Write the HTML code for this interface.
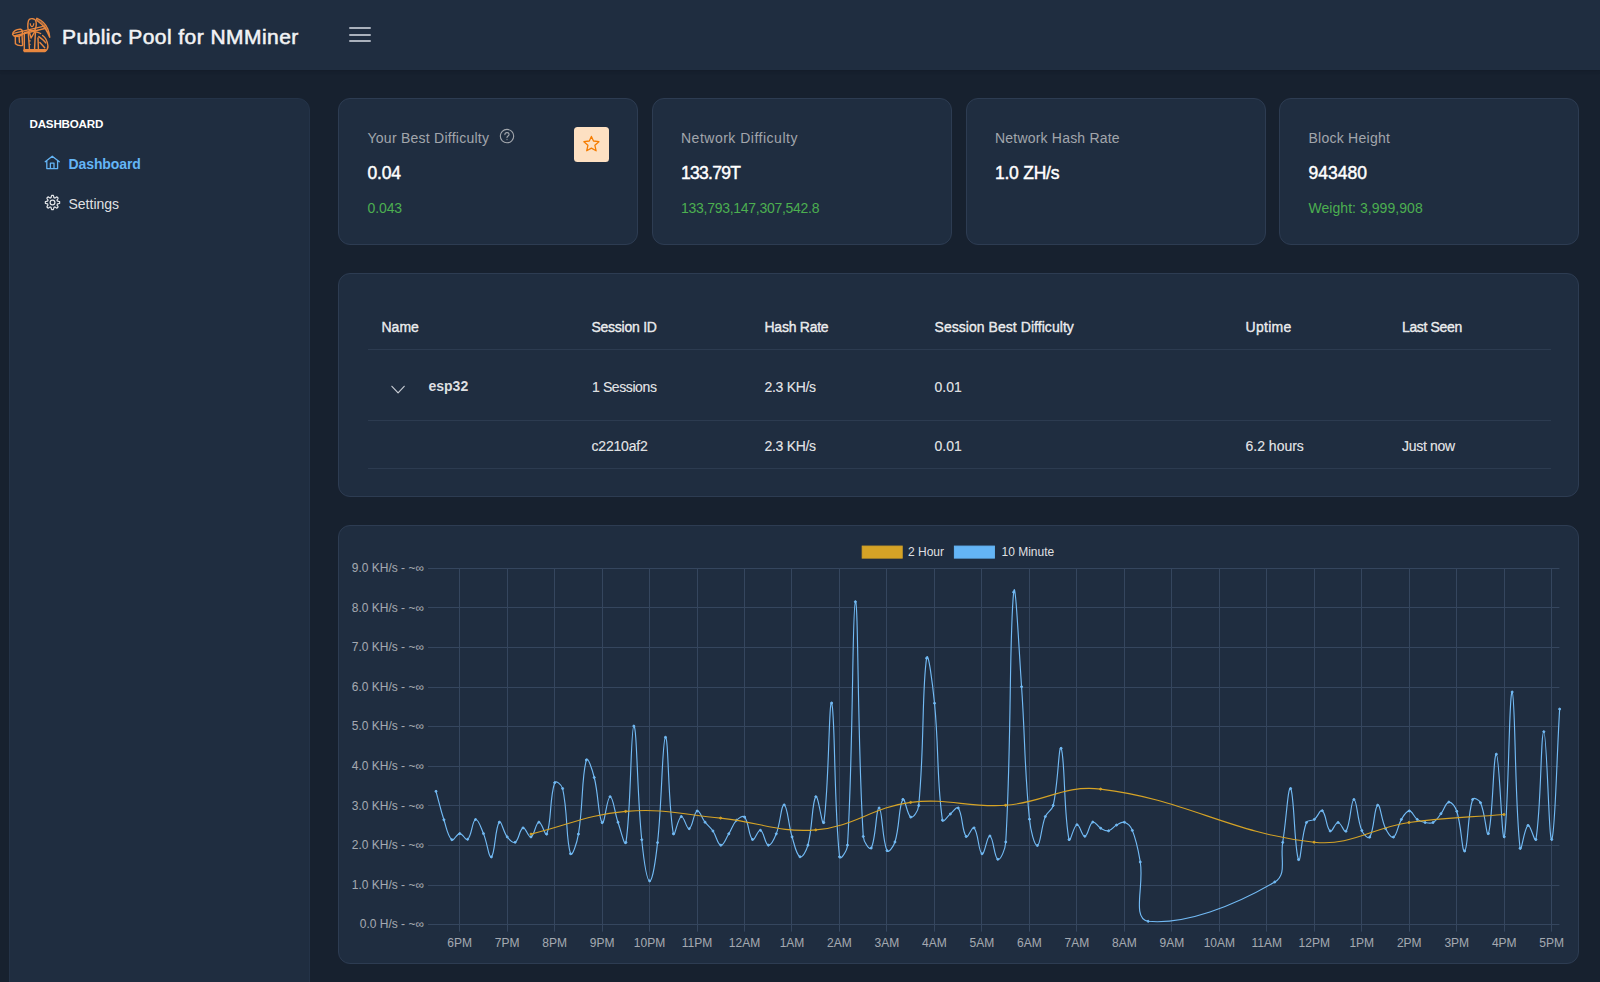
<!DOCTYPE html>
<html><head><meta charset="utf-8">
<style>
*{box-sizing:border-box;margin:0;padding:0}
html,body{width:1600px;height:982px;overflow:hidden;background:#17212f;font-family:"Liberation Sans",sans-serif;color:rgba(255,255,255,.87)}
.a{position:absolute;white-space:nowrap;line-height:1}
.topbar{position:absolute;left:0;top:0;width:1600px;height:70px;background:#1f2d40;box-shadow:0 3px 5px rgba(0,0,0,.02),0 0 2px rgba(0,0,0,.05),0 1px 4px rgba(0,0,0,.08)}
.sidebar{position:absolute;left:9px;top:98px;width:301px;height:900px;background:#1f2d40;border-radius:12px;border:1px solid #243348}
.card{position:absolute;background:#1f2d40;border:1px solid #2d3c52;border-radius:12px}
.lbl{font-size:14px;color:#a2a6ac}
.val{font-size:17.5px;color:#fff;font-weight:400;-webkit-text-stroke:0.45px #fff}
.grn{font-size:14px;color:#4caf50}
.th{font-size:14px;font-weight:400;-webkit-text-stroke:0.4px rgba(255,255,255,.87)}
.b7{font-weight:700;-webkit-text-stroke:0}
.td{font-size:14px;-webkit-text-stroke:0.15px rgba(255,255,255,.87)}
.hl{position:absolute;left:368px;width:1183px;height:1px;background:#2c3b50}
</style></head><body>
<div class="topbar"></div>
<svg class="a" style="left:8px;top:14px" width="48" height="42" viewBox="0 0 48 42" fill="none" stroke="#e8873f" stroke-width="1.45" stroke-linejoin="round" stroke-linecap="round">
<path d="M29,4.3 C33.5,6.2 37.8,10 39.8,15 C40.8,17.8 41.6,20.5 41.7,23.2 C40.6,20.6 39.4,18 37.6,15.2 C35.8,12.2 32.6,9 29.6,7 C28.6,6.2 28.4,5 29,4.3 Z"/>
<path d="M30.5,6.2 C33.5,8.5 36.5,11.5 38.6,15.5" stroke-width="1"/>
<path d="M5.5,19.4 L37.2,11.9 M6.2,22 L37.8,14.2"/>
<path d="M4.6,20.6 C4.4,17.6 8.4,15 12.6,15.3 C14.4,15.9 14.7,18.6 14.1,20.7 C11,23 6.4,23 4.6,20.6 Z"/>
<path d="M7.3,21.9 L7.4,29.8 C9,31.4 11.8,31.8 14.3,31.5 M11.1,22.4 L11.5,28.2 M14,21 L14.6,31"/>
<path d="M20.2,15.6 C19.4,12 19.8,6.6 21.4,5.3 C23.2,4.1 26.7,4.5 27.6,6.3 C28.5,8.6 28.1,13 27.1,15.7 C25.6,17.1 21.6,17.1 20.2,15.6 Z"/>
<path d="M22.2,9.6 C22.8,13.6 25.2,13.6 25.8,9.6" stroke-width="1.1"/>
<path d="M16.3,19 C18,18.1 20,17.9 21.2,17.7 L23.1,24 L26.8,17.7 C29,17.9 31,18.5 32.6,19.5 M16.3,19 L16.3,37.5 L37,37.5 C39.1,36.1 40.1,34 39.9,31.8 C39.5,27.5 38.1,24 34.6,21.5"/>
<path d="M20.3,18.7 L21.4,34.6 M27.4,18.7 L26.6,34.6 M30.8,22.6 C33.2,24.3 36,26.3 37.7,28.9 M31.9,28.6 L36.7,33.7 M30,24 L30.4,34.5"/>
<path d="M16.6,36.2 L37.2,36.2" stroke-width="2.6"/>
<circle cx="21.9" cy="26.9" r="0.8" fill="#e8873f" stroke="none"/><circle cx="21.9" cy="30.5" r="0.8" fill="#e8873f" stroke="none"/>
</svg>
<div class="a" style="left:62px;top:25.6px;font-size:21px;font-weight:400;letter-spacing:0.45px;color:#f2f3f5;-webkit-text-stroke:0.55px #f2f3f5">Public Pool for NMMiner</div>
<div class="a" style="left:349px;top:27px;width:22px;height:2px;background:#aab1bc;border-radius:1px"></div>
<div class="a" style="left:349px;top:33.5px;width:22px;height:2px;background:#aab1bc;border-radius:1px"></div>
<div class="a" style="left:349px;top:39.5px;width:22px;height:2px;background:#aab1bc;border-radius:1px"></div>

<div class="sidebar"></div>
<div class="a" style="left:29.5px;top:117.5px;font-size:11.6px;font-weight:700;letter-spacing:-0.2px;color:#fff">DASHBOARD</div>
<svg class="a" style="left:44px;top:155px" width="17" height="15" viewBox="0 0 17 15" fill="none" stroke="#64b5f6" stroke-width="1.3" stroke-linejoin="round" stroke-linecap="round">
<path d="M1.2,6.7 L8.25,1.2 L15.3,6.7 M2.8,5.6 L2.8,13.6 L13.6,13.6 L13.6,5.6 M6.4,13.6 L6.4,8.2 L10,8.2 L10,13.6"/>
</svg>
<div class="a" style="left:68.5px;top:157px;font-size:14px;font-weight:700;letter-spacing:-0.1px;color:#64b5f6">Dashboard</div>
<svg class="a" style="left:44px;top:194px" width="17" height="17" viewBox="-8.5 -8.5 17 17" fill="none" stroke="#e4e6e9" stroke-width="1.2" stroke-linejoin="round">
<path d="M0.00,-7.15 L0.28,-7.14 L0.56,-7.13 L0.84,-7.10 L1.04,-6.57 L1.19,-5.98 L1.30,-5.40 L1.37,-4.86 L1.56,-4.80 L1.75,-4.74 L1.93,-4.67 L2.11,-4.59 L2.29,-4.50 L2.47,-4.41 L2.90,-4.73 L3.39,-5.07 L3.91,-5.38 L4.43,-5.61 L4.64,-5.44 L4.85,-5.25 L5.06,-5.06 L5.25,-4.85 L5.44,-4.64 L5.61,-4.43 L5.38,-3.91 L5.07,-3.39 L4.73,-2.90 L4.41,-2.47 L4.50,-2.29 L4.59,-2.11 L4.67,-1.93 L4.74,-1.75 L4.80,-1.56 L4.86,-1.37 L5.40,-1.30 L5.98,-1.19 L6.57,-1.04 L7.10,-0.84 L7.13,-0.56 L7.14,-0.28 L7.15,-0.00 L7.14,0.28 L7.13,0.56 L7.10,0.84 L6.57,1.04 L5.98,1.19 L5.40,1.30 L4.86,1.37 L4.80,1.56 L4.74,1.75 L4.67,1.93 L4.59,2.11 L4.50,2.29 L4.41,2.47 L4.73,2.90 L5.07,3.39 L5.38,3.91 L5.61,4.43 L5.44,4.64 L5.25,4.85 L5.06,5.06 L4.85,5.25 L4.64,5.44 L4.43,5.61 L3.91,5.38 L3.39,5.07 L2.90,4.73 L2.47,4.41 L2.29,4.50 L2.11,4.59 L1.93,4.67 L1.75,4.74 L1.56,4.80 L1.37,4.86 L1.30,5.40 L1.19,5.98 L1.04,6.57 L0.84,7.10 L0.56,7.13 L0.28,7.14 L0.00,7.15 L-0.28,7.14 L-0.56,7.13 L-0.84,7.10 L-1.04,6.57 L-1.19,5.98 L-1.30,5.40 L-1.37,4.86 L-1.56,4.80 L-1.75,4.74 L-1.93,4.67 L-2.11,4.59 L-2.29,4.50 L-2.47,4.41 L-2.90,4.73 L-3.39,5.07 L-3.91,5.38 L-4.43,5.61 L-4.64,5.44 L-4.85,5.25 L-5.06,5.06 L-5.25,4.85 L-5.44,4.64 L-5.61,4.43 L-5.38,3.91 L-5.07,3.39 L-4.73,2.90 L-4.41,2.47 L-4.50,2.29 L-4.59,2.11 L-4.67,1.93 L-4.74,1.75 L-4.80,1.56 L-4.86,1.37 L-5.40,1.30 L-5.98,1.19 L-6.57,1.04 L-7.10,0.84 L-7.13,0.56 L-7.14,0.28 L-7.15,0.00 L-7.14,-0.28 L-7.13,-0.56 L-7.10,-0.84 L-6.57,-1.04 L-5.98,-1.19 L-5.40,-1.30 L-4.86,-1.37 L-4.80,-1.56 L-4.74,-1.75 L-4.67,-1.93 L-4.59,-2.11 L-4.50,-2.29 L-4.41,-2.47 L-4.73,-2.90 L-5.07,-3.39 L-5.38,-3.91 L-5.61,-4.43 L-5.44,-4.64 L-5.25,-4.85 L-5.06,-5.06 L-4.85,-5.25 L-4.64,-5.44 L-4.43,-5.61 L-3.91,-5.38 L-3.39,-5.07 L-2.90,-4.73 L-2.47,-4.41 L-2.29,-4.50 L-2.11,-4.59 L-1.93,-4.67 L-1.75,-4.74 L-1.56,-4.80 L-1.37,-4.86 L-1.30,-5.40 L-1.19,-5.98 L-1.04,-6.57 L-0.84,-7.10 L-0.56,-7.13 L-0.28,-7.14Z"/>
<circle cx="0" cy="0" r="2.4"/>
</svg>
<div class="a" style="left:68.5px;top:197px;font-size:14px;color:rgba(255,255,255,.87)">Settings</div>

<div class="card" style="left:338px;top:98px;width:300px;height:147px"></div>
<div class="card" style="left:652px;top:98px;width:300px;height:147px"></div>
<div class="card" style="left:966px;top:98px;width:300px;height:147px"></div>
<div class="card" style="left:1279px;top:98px;width:300px;height:147px"></div>

<div class="a lbl" style="left:367.5px;top:131px;letter-spacing:0.25px">Your Best Difficulty</div>
<svg class="a" style="left:498px;top:128px" width="17" height="17" viewBox="0 0 17 17" fill="none" stroke="#a2a6ac" stroke-width="1.1" stroke-linecap="round">
<circle cx="9" cy="8.1" r="6.7"/>
<path d="M6.9,6.6 C6.9,5.2 7.9,4.6 9,4.6 C10.2,4.6 11.1,5.4 11.1,6.5 C11.1,7.9 9,8.2 9,9.6"/>
<circle cx="9" cy="11.6" r="0.55" fill="#a2a6ac" stroke="none"/>
</svg>
<div class="a val" style="left:367.5px;top:165px;letter-spacing:-0.2px">0.04</div>
<div class="a grn" style="left:367.5px;top:201px;letter-spacing:-0.1px">0.043</div>
<div class="a" style="left:574px;top:127px;width:35px;height:35px;background:#fde0c2;border-radius:3.5px"></div>
<svg class="a" style="left:574px;top:127px" width="35" height="35" viewBox="574 127 35 35" fill="none" stroke="#f57c00" stroke-width="1.3" stroke-linejoin="round">
<path d="M591.4,136.4 L593.5,141 L598.9,141.7 L594.9,145.3 L596.1,150.8 L591.4,148.1 L586.7,150.8 L587.9,145.3 L583.9,141.7 L589.3,141 Z"/>
</svg>

<div class="a lbl" style="left:681px;top:131px;letter-spacing:0.5px">Network Difficulty</div>
<div class="a val" style="left:681px;top:165px;letter-spacing:-0.7px">133.79T</div>
<div class="a grn" style="left:681px;top:201px;letter-spacing:-0.28px">133,793,147,307,542.8</div>

<div class="a lbl" style="left:995px;top:131px;letter-spacing:0.2px">Network Hash Rate</div>
<div class="a val" style="left:995px;top:165px;letter-spacing:-0.25px">1.0 ZH/s</div>

<div class="a lbl" style="left:1308.5px;top:131px;letter-spacing:0.25px">Block Height</div>
<div class="a val" style="left:1308.5px;top:165px">943480</div>
<div class="a grn" style="left:1308.5px;top:201px;letter-spacing:0.05px">Weight: 3,999,908</div>

<div class="card" style="left:338px;top:273px;width:1241px;height:224px"></div>
<div class="a th" style="left:381.5px;top:320px">Name</div>
<div class="a th" style="left:591.5px;top:320px;letter-spacing:-0.25px">Session ID</div>
<div class="a th" style="left:764.5px;top:320px;letter-spacing:-0.25px">Hash Rate</div>
<div class="a th" style="left:934.5px;top:320px;letter-spacing:0.05px">Session Best Difficulty</div>
<div class="a th" style="left:1245.5px;top:320px;letter-spacing:0.3px">Uptime</div>
<div class="a th" style="left:1402px;top:320px;letter-spacing:-0.35px">Last Seen</div>
<div class="hl" style="top:349px"></div>
<svg class="a" style="left:389px;top:383px" width="18" height="13" viewBox="389 383 18 13" fill="none" stroke="#c5cad2" stroke-width="1.2" stroke-linecap="round" stroke-linejoin="round">
<path d="M391.9,386.3 L398.1,392.8 L404.2,386.3"/>
</svg>
<div class="a th b7" style="left:428.5px;top:379px">esp32</div>
<div class="a td" style="left:592px;top:379.5px;letter-spacing:-0.4px">1 Sessions</div>
<div class="a td" style="left:764.5px;top:379.5px;letter-spacing:-0.3px">2.3 KH/s</div>
<div class="a td" style="left:934.5px;top:379.5px">0.01</div>
<div class="hl" style="top:420px"></div>
<div class="a td" style="left:591.5px;top:438.5px;letter-spacing:-0.2px">c2210af2</div>
<div class="a td" style="left:764.5px;top:438.5px;letter-spacing:-0.3px">2.3 KH/s</div>
<div class="a td" style="left:934.5px;top:438.5px">0.01</div>
<div class="a td" style="left:1245.5px;top:438.5px">6.2 hours</div>
<div class="a td" style="left:1402px;top:438.5px;letter-spacing:-0.3px">Just now</div>
<div class="hl" style="top:468px"></div>

<div class="card" style="left:338px;top:525px;width:1241px;height:439px"></div>
<svg id="chart" class="a" style="left:0;top:0" width="1600" height="982" viewBox="0 0 1600 982">
<line x1="428" y1="568.50" x2="1559.40" y2="568.50" stroke="#35465e" stroke-width="1"/>
<line x1="428" y1="607.50" x2="1559.40" y2="607.50" stroke="#35465e" stroke-width="1"/>
<line x1="428" y1="647.50" x2="1559.40" y2="647.50" stroke="#35465e" stroke-width="1"/>
<line x1="428" y1="687.50" x2="1559.40" y2="687.50" stroke="#35465e" stroke-width="1"/>
<line x1="428" y1="726.50" x2="1559.40" y2="726.50" stroke="#35465e" stroke-width="1"/>
<line x1="428" y1="766.50" x2="1559.40" y2="766.50" stroke="#35465e" stroke-width="1"/>
<line x1="428" y1="805.50" x2="1559.40" y2="805.50" stroke="#35465e" stroke-width="1"/>
<line x1="428" y1="845.50" x2="1559.40" y2="845.50" stroke="#35465e" stroke-width="1"/>
<line x1="428" y1="885.50" x2="1559.40" y2="885.50" stroke="#35465e" stroke-width="1"/>
<line x1="428" y1="924.50" x2="1559.40" y2="924.50" stroke="#35465e" stroke-width="1"/>
<line x1="459.50" y1="568.40" x2="459.50" y2="931.65" stroke="#35465e" stroke-width="1"/>
<line x1="507.50" y1="568.40" x2="507.50" y2="931.65" stroke="#35465e" stroke-width="1"/>
<line x1="554.50" y1="568.40" x2="554.50" y2="931.65" stroke="#35465e" stroke-width="1"/>
<line x1="602.50" y1="568.40" x2="602.50" y2="931.65" stroke="#35465e" stroke-width="1"/>
<line x1="649.50" y1="568.40" x2="649.50" y2="931.65" stroke="#35465e" stroke-width="1"/>
<line x1="697.50" y1="568.40" x2="697.50" y2="931.65" stroke="#35465e" stroke-width="1"/>
<line x1="744.50" y1="568.40" x2="744.50" y2="931.65" stroke="#35465e" stroke-width="1"/>
<line x1="791.50" y1="568.40" x2="791.50" y2="931.65" stroke="#35465e" stroke-width="1"/>
<line x1="839.50" y1="568.40" x2="839.50" y2="931.65" stroke="#35465e" stroke-width="1"/>
<line x1="886.50" y1="568.40" x2="886.50" y2="931.65" stroke="#35465e" stroke-width="1"/>
<line x1="934.50" y1="568.40" x2="934.50" y2="931.65" stroke="#35465e" stroke-width="1"/>
<line x1="981.50" y1="568.40" x2="981.50" y2="931.65" stroke="#35465e" stroke-width="1"/>
<line x1="1029.50" y1="568.40" x2="1029.50" y2="931.65" stroke="#35465e" stroke-width="1"/>
<line x1="1076.50" y1="568.40" x2="1076.50" y2="931.65" stroke="#35465e" stroke-width="1"/>
<line x1="1124.50" y1="568.40" x2="1124.50" y2="931.65" stroke="#35465e" stroke-width="1"/>
<line x1="1171.50" y1="568.40" x2="1171.50" y2="931.65" stroke="#35465e" stroke-width="1"/>
<line x1="1219.50" y1="568.40" x2="1219.50" y2="931.65" stroke="#35465e" stroke-width="1"/>
<line x1="1266.50" y1="568.40" x2="1266.50" y2="931.65" stroke="#35465e" stroke-width="1"/>
<line x1="1314.50" y1="568.40" x2="1314.50" y2="931.65" stroke="#35465e" stroke-width="1"/>
<line x1="1361.50" y1="568.40" x2="1361.50" y2="931.65" stroke="#35465e" stroke-width="1"/>
<line x1="1409.50" y1="568.40" x2="1409.50" y2="931.65" stroke="#35465e" stroke-width="1"/>
<line x1="1456.50" y1="568.40" x2="1456.50" y2="931.65" stroke="#35465e" stroke-width="1"/>
<line x1="1504.50" y1="568.40" x2="1504.50" y2="931.65" stroke="#35465e" stroke-width="1"/>
<line x1="1551.50" y1="568.40" x2="1551.50" y2="931.65" stroke="#35465e" stroke-width="1"/>
<g font-family="Liberation Sans" font-size="12" fill="rgba(255,255,255,0.6)"><text x="424" y="572.10" text-anchor="end">9.0 KH/s - ~∞</text><text x="424" y="611.68" text-anchor="end">8.0 KH/s - ~∞</text><text x="424" y="651.27" text-anchor="end">7.0 KH/s - ~∞</text><text x="424" y="690.85" text-anchor="end">6.0 KH/s - ~∞</text><text x="424" y="730.43" text-anchor="end">5.0 KH/s - ~∞</text><text x="424" y="770.02" text-anchor="end">4.0 KH/s - ~∞</text><text x="424" y="809.60" text-anchor="end">3.0 KH/s - ~∞</text><text x="424" y="849.18" text-anchor="end">2.0 KH/s - ~∞</text><text x="424" y="888.77" text-anchor="end">1.0 KH/s - ~∞</text><text x="424" y="928.35" text-anchor="end">0.0 H/s - ~∞</text><text x="459.60" y="946.5" text-anchor="middle">6PM</text><text x="507.08" y="946.5" text-anchor="middle">7PM</text><text x="554.57" y="946.5" text-anchor="middle">8PM</text><text x="602.05" y="946.5" text-anchor="middle">9PM</text><text x="649.53" y="946.5" text-anchor="middle">10PM</text><text x="697.01" y="946.5" text-anchor="middle">11PM</text><text x="744.50" y="946.5" text-anchor="middle">12AM</text><text x="791.98" y="946.5" text-anchor="middle">1AM</text><text x="839.46" y="946.5" text-anchor="middle">2AM</text><text x="886.94" y="946.5" text-anchor="middle">3AM</text><text x="934.43" y="946.5" text-anchor="middle">4AM</text><text x="981.91" y="946.5" text-anchor="middle">5AM</text><text x="1029.39" y="946.5" text-anchor="middle">6AM</text><text x="1076.87" y="946.5" text-anchor="middle">7AM</text><text x="1124.36" y="946.5" text-anchor="middle">8AM</text><text x="1171.84" y="946.5" text-anchor="middle">9AM</text><text x="1219.32" y="946.5" text-anchor="middle">10AM</text><text x="1266.80" y="946.5" text-anchor="middle">11AM</text><text x="1314.29" y="946.5" text-anchor="middle">12PM</text><text x="1361.77" y="946.5" text-anchor="middle">1PM</text><text x="1409.25" y="946.5" text-anchor="middle">2PM</text><text x="1456.73" y="946.5" text-anchor="middle">3PM</text><text x="1504.22" y="946.5" text-anchor="middle">4PM</text><text x="1551.70" y="946.5" text-anchor="middle">5PM</text></g>
<rect x="862.2" y="546.1" width="40" height="12" fill="#d5a326" stroke="#d5a326" stroke-width="1"/>
<rect x="954.4" y="546.1" width="40" height="12" fill="#64b5f6" stroke="#64b5f6" stroke-width="1"/>
<g font-family="Liberation Sans" font-size="12" fill="rgba(255,255,255,0.87)"><text x="908" y="556">2 Hour</text><text x="1001.5" y="556">10 Minute</text></g>
<path d="M436.00,791.30C439.17,802.70 440.24,808.57 443.91,819.80C446.57,827.93 447.51,835.94 451.83,839.70C453.84,841.46 456.54,833.68 459.74,833.60C462.87,833.52 465.67,841.07 467.65,839.30C472.00,835.43 471.96,820.80 475.56,819.50C478.30,818.52 480.97,827.67 483.48,833.60C487.30,842.63 488.80,858.76 491.39,856.90C495.13,854.20 494.99,827.65 499.30,822.20C501.33,819.65 503.19,831.79 507.22,836.90C509.53,839.83 512.80,843.63 515.13,842.30C519.13,840.03 519.38,829.15 523.04,827.90C525.71,826.99 528.31,837.85 530.96,836.90C534.64,835.57 535.46,822.80 538.87,822.20C541.79,821.68 545.42,837.51 546.78,834.10C551.75,821.71 549.37,798.05 554.70,782.70C555.70,779.81 561.79,784.81 562.61,788.50C568.12,813.21 565.73,839.90 570.52,853.70C572.06,858.14 577.04,842.38 578.43,834.10C583.37,804.90 581.31,778.00 586.35,760.00C587.64,755.36 592.39,770.10 594.26,777.50C598.72,795.18 598.20,817.88 602.17,822.70C604.53,825.56 606.89,796.80 610.09,796.70C613.22,796.60 614.51,812.11 618.00,822.20C620.84,830.39 624.92,848.43 625.91,842.40C631.25,809.99 630.62,726.65 633.83,726.10C636.95,725.57 637.11,794.45 641.74,839.70C643.44,856.37 646.37,880.30 649.65,880.90C652.71,881.46 655.85,858.12 657.56,842.60C662.18,800.68 662.17,739.14 665.48,737.30C668.51,735.62 668.10,807.32 673.39,833.80C674.43,839.00 677.72,817.66 681.30,816.50C684.05,815.62 686.50,829.64 689.22,828.70C692.83,827.44 693.42,812.52 697.13,811.00C699.75,809.92 701.64,817.91 705.04,822.20C707.97,825.91 710.29,827.12 712.95,831.00C716.62,836.32 717.45,844.60 720.87,845.20C723.78,845.72 725.81,838.49 728.78,833.80C732.14,828.49 732.58,824.54 736.69,820.20C738.91,817.86 742.94,815.07 744.61,817.10C749.27,822.79 748.33,836.01 752.52,839.50C754.66,841.29 757.78,829.35 760.43,830.30C764.12,831.63 764.87,844.43 768.35,845.20C771.20,845.83 774.26,838.90 776.26,833.80C780.59,822.78 781.16,804.31 784.17,804.90C787.49,805.55 788.25,824.32 792.09,836.90C794.58,845.08 796.17,854.79 800.00,856.80C802.50,858.11 806.50,850.54 807.91,845.20C812.83,826.50 811.74,802.53 815.82,796.70C818.07,793.49 822.57,829.51 823.74,822.60C828.90,792.03 828.88,697.01 831.65,703.00C835.21,710.69 833.76,804.67 839.56,856.80C840.09,861.55 847.13,850.76 847.48,845.20C853.46,748.72 852.17,603.47 855.39,601.70C858.50,599.99 857.33,743.51 863.30,836.50C863.66,842.03 869.60,850.91 871.22,848.00C875.93,839.51 876.06,807.48 879.13,808.00C882.39,808.56 882.06,840.00 887.04,850.70C888.39,853.60 893.60,846.38 894.95,842.00C899.93,825.86 898.49,806.28 902.87,799.40C904.82,796.32 907.11,815.68 910.78,817.10C913.44,818.12 918.14,811.02 918.69,805.50C924.47,747.46 921.78,689.40 926.61,658.20C928.11,648.52 932.74,685.09 934.52,703.30C939.07,749.89 936.60,779.42 942.43,820.20C942.93,823.70 947.16,816.45 950.35,814.00C953.49,811.57 956.67,805.74 958.26,808.00C963.00,814.74 961.63,830.79 966.17,836.50C967.96,838.75 972.18,825.81 974.08,827.90C978.51,832.73 978.32,851.92 982.00,853.80C984.65,855.16 987.11,835.03 989.91,836.00C993.44,837.23 994.25,857.95 997.82,859.30C1000.58,860.35 1005.29,849.56 1005.74,842.00C1011.62,742.72 1009.06,637.23 1013.65,592.20C1015.39,575.11 1018.92,648.86 1021.56,686.70C1025.25,739.66 1024.23,766.57 1029.47,819.20C1030.56,830.09 1034.36,846.00 1037.39,845.50C1040.69,844.96 1040.96,827.60 1045.30,816.60C1047.29,811.56 1052.00,810.65 1053.21,805.40C1058.33,783.33 1058.68,743.02 1061.13,748.30C1065.01,756.70 1063.69,813.79 1069.04,839.60C1070.02,844.35 1073.50,825.42 1076.95,824.70C1079.83,824.10 1081.93,836.78 1084.87,836.30C1088.26,835.74 1088.86,824.11 1092.78,822.10C1095.19,820.87 1097.24,826.30 1100.69,828.20C1103.57,829.78 1105.69,831.37 1108.61,830.80C1112.02,830.13 1113.12,826.93 1116.52,825.10C1119.45,823.53 1121.74,821.40 1124.43,822.30C1128.07,823.52 1130.71,826.30 1132.34,830.40C1137.04,842.18 1138.03,849.18 1140.26,862.00C1144.36,885.54 1131.44,918.81 1148.17,921.30C1185.25,924.65 1233.53,906.19 1274.78,882.00C1287.34,874.63 1280.00,858.32 1282.69,842.40C1286.33,820.92 1287.87,785.53 1290.60,788.50C1294.20,792.41 1294.38,850.71 1298.52,859.60C1300.71,864.31 1301.26,835.64 1306.43,822.50C1307.59,819.56 1311.69,821.38 1314.34,819.40C1318.02,816.66 1320.04,809.07 1322.26,810.70C1326.37,813.71 1326.04,827.92 1330.17,831.00C1332.37,832.64 1334.94,822.46 1338.08,822.50C1341.27,822.54 1344.32,833.64 1345.99,831.20C1350.65,824.44 1350.71,799.62 1353.91,799.50C1357.04,799.38 1357.02,819.20 1361.82,830.60C1363.35,834.24 1368.23,839.51 1369.73,837.10C1374.56,829.35 1374.03,807.14 1377.65,805.20C1380.36,803.74 1381.25,819.92 1385.56,828.60C1387.58,832.68 1391.10,838.48 1393.47,837.10C1397.43,834.80 1397.43,825.95 1401.39,819.40C1403.76,815.47 1406.13,810.90 1409.30,810.90C1412.46,810.90 1413.56,816.72 1417.21,819.40C1419.89,821.36 1421.85,821.86 1425.12,822.50C1428.18,823.10 1430.50,823.91 1433.04,822.50C1436.83,820.39 1438.06,817.43 1440.95,813.70C1444.39,809.27 1445.47,802.61 1448.86,802.10C1451.80,801.65 1455.32,806.79 1456.78,811.30C1461.65,826.35 1461.92,853.06 1464.69,851.00C1468.25,848.34 1467.16,816.10 1472.60,799.50C1473.49,796.78 1479.18,799.82 1480.52,802.70C1485.51,813.46 1486.62,839.14 1488.43,833.60C1492.95,819.74 1493.24,753.57 1496.34,754.20C1499.57,754.85 1501.95,845.86 1504.26,836.80C1508.28,820.98 1509.12,689.79 1512.17,692.00C1515.45,694.39 1514.60,802.09 1520.08,848.30C1520.93,855.45 1524.20,827.51 1527.99,825.40C1530.53,823.99 1535.08,844.38 1535.91,839.50C1541.41,806.90 1540.65,731.70 1543.82,731.70C1546.99,731.70 1548.87,843.59 1551.73,839.50C1555.20,834.55 1556.48,761.26 1559.65,709.10" fill="none" stroke="#72baf4" stroke-width="1.15"/>
<g fill="#72baf4" stroke="#72baf4" stroke-width="1"><circle cx="436.00" cy="791.30" r="1"/><circle cx="443.91" cy="819.80" r="1"/><circle cx="451.83" cy="839.70" r="1"/><circle cx="459.74" cy="833.60" r="1"/><circle cx="467.65" cy="839.30" r="1"/><circle cx="475.56" cy="819.50" r="1"/><circle cx="483.48" cy="833.60" r="1"/><circle cx="491.39" cy="856.90" r="1"/><circle cx="499.30" cy="822.20" r="1"/><circle cx="507.22" cy="836.90" r="1"/><circle cx="515.13" cy="842.30" r="1"/><circle cx="523.04" cy="827.90" r="1"/><circle cx="530.96" cy="836.90" r="1"/><circle cx="538.87" cy="822.20" r="1"/><circle cx="546.78" cy="834.10" r="1"/><circle cx="554.70" cy="782.70" r="1"/><circle cx="562.61" cy="788.50" r="1"/><circle cx="570.52" cy="853.70" r="1"/><circle cx="578.43" cy="834.10" r="1"/><circle cx="586.35" cy="760.00" r="1"/><circle cx="594.26" cy="777.50" r="1"/><circle cx="602.17" cy="822.70" r="1"/><circle cx="610.09" cy="796.70" r="1"/><circle cx="618.00" cy="822.20" r="1"/><circle cx="625.91" cy="842.40" r="1"/><circle cx="633.83" cy="726.10" r="1"/><circle cx="641.74" cy="839.70" r="1"/><circle cx="649.65" cy="880.90" r="1"/><circle cx="657.56" cy="842.60" r="1"/><circle cx="665.48" cy="737.30" r="1"/><circle cx="673.39" cy="833.80" r="1"/><circle cx="681.30" cy="816.50" r="1"/><circle cx="689.22" cy="828.70" r="1"/><circle cx="697.13" cy="811.00" r="1"/><circle cx="705.04" cy="822.20" r="1"/><circle cx="712.95" cy="831.00" r="1"/><circle cx="720.87" cy="845.20" r="1"/><circle cx="728.78" cy="833.80" r="1"/><circle cx="736.69" cy="820.20" r="1"/><circle cx="744.61" cy="817.10" r="1"/><circle cx="752.52" cy="839.50" r="1"/><circle cx="760.43" cy="830.30" r="1"/><circle cx="768.35" cy="845.20" r="1"/><circle cx="776.26" cy="833.80" r="1"/><circle cx="784.17" cy="804.90" r="1"/><circle cx="792.09" cy="836.90" r="1"/><circle cx="800.00" cy="856.80" r="1"/><circle cx="807.91" cy="845.20" r="1"/><circle cx="815.82" cy="796.70" r="1"/><circle cx="823.74" cy="822.60" r="1"/><circle cx="831.65" cy="703.00" r="1"/><circle cx="839.56" cy="856.80" r="1"/><circle cx="847.48" cy="845.20" r="1"/><circle cx="855.39" cy="601.70" r="1"/><circle cx="863.30" cy="836.50" r="1"/><circle cx="871.22" cy="848.00" r="1"/><circle cx="879.13" cy="808.00" r="1"/><circle cx="887.04" cy="850.70" r="1"/><circle cx="894.95" cy="842.00" r="1"/><circle cx="902.87" cy="799.40" r="1"/><circle cx="910.78" cy="817.10" r="1"/><circle cx="918.69" cy="805.50" r="1"/><circle cx="926.61" cy="658.20" r="1"/><circle cx="934.52" cy="703.30" r="1"/><circle cx="942.43" cy="820.20" r="1"/><circle cx="950.35" cy="814.00" r="1"/><circle cx="958.26" cy="808.00" r="1"/><circle cx="966.17" cy="836.50" r="1"/><circle cx="974.08" cy="827.90" r="1"/><circle cx="982.00" cy="853.80" r="1"/><circle cx="989.91" cy="836.00" r="1"/><circle cx="997.82" cy="859.30" r="1"/><circle cx="1005.74" cy="842.00" r="1"/><circle cx="1013.65" cy="592.20" r="1"/><circle cx="1021.56" cy="686.70" r="1"/><circle cx="1029.47" cy="819.20" r="1"/><circle cx="1037.39" cy="845.50" r="1"/><circle cx="1045.30" cy="816.60" r="1"/><circle cx="1053.21" cy="805.40" r="1"/><circle cx="1061.13" cy="748.30" r="1"/><circle cx="1069.04" cy="839.60" r="1"/><circle cx="1076.95" cy="824.70" r="1"/><circle cx="1084.87" cy="836.30" r="1"/><circle cx="1092.78" cy="822.10" r="1"/><circle cx="1100.69" cy="828.20" r="1"/><circle cx="1108.61" cy="830.80" r="1"/><circle cx="1116.52" cy="825.10" r="1"/><circle cx="1124.43" cy="822.30" r="1"/><circle cx="1132.34" cy="830.40" r="1"/><circle cx="1140.26" cy="862.00" r="1"/><circle cx="1148.17" cy="921.30" r="1"/><circle cx="1274.78" cy="882.00" r="1"/><circle cx="1282.69" cy="842.40" r="1"/><circle cx="1290.60" cy="788.50" r="1"/><circle cx="1298.52" cy="859.60" r="1"/><circle cx="1306.43" cy="822.50" r="1"/><circle cx="1314.34" cy="819.40" r="1"/><circle cx="1322.26" cy="810.70" r="1"/><circle cx="1330.17" cy="831.00" r="1"/><circle cx="1338.08" cy="822.50" r="1"/><circle cx="1345.99" cy="831.20" r="1"/><circle cx="1353.91" cy="799.50" r="1"/><circle cx="1361.82" cy="830.60" r="1"/><circle cx="1369.73" cy="837.10" r="1"/><circle cx="1377.65" cy="805.20" r="1"/><circle cx="1385.56" cy="828.60" r="1"/><circle cx="1393.47" cy="837.10" r="1"/><circle cx="1401.39" cy="819.40" r="1"/><circle cx="1409.30" cy="810.90" r="1"/><circle cx="1417.21" cy="819.40" r="1"/><circle cx="1425.12" cy="822.50" r="1"/><circle cx="1433.04" cy="822.50" r="1"/><circle cx="1440.95" cy="813.70" r="1"/><circle cx="1448.86" cy="802.10" r="1"/><circle cx="1456.78" cy="811.30" r="1"/><circle cx="1464.69" cy="851.00" r="1"/><circle cx="1472.60" cy="799.50" r="1"/><circle cx="1480.52" cy="802.70" r="1"/><circle cx="1488.43" cy="833.60" r="1"/><circle cx="1496.34" cy="754.20" r="1"/><circle cx="1504.26" cy="836.80" r="1"/><circle cx="1512.17" cy="692.00" r="1"/><circle cx="1520.08" cy="848.30" r="1"/><circle cx="1527.99" cy="825.40" r="1"/><circle cx="1535.91" cy="839.50" r="1"/><circle cx="1543.82" cy="731.70" r="1"/><circle cx="1551.73" cy="839.50" r="1"/><circle cx="1559.65" cy="709.10" r="1"/></g>
<path d="M531.00,834.10C568.84,825.02 587.28,814.63 625.60,811.40C663.12,808.23 682.70,814.41 720.60,818.10C758.78,821.81 778.34,833.00 815.80,829.90C854.34,826.72 871.92,807.41 910.60,802.40C947.84,797.57 967.86,807.94 1005.60,805.30C1043.86,802.62 1063.01,784.60 1100.60,789.10C1186.41,799.36 1228.47,832.93 1314.10,842.20C1351.83,846.29 1370.71,828.09 1409.00,822.50C1446.67,817.01 1466.00,817.70 1504.00,814.50" fill="none" stroke="#d5a326" stroke-width="1.1"/>
<g fill="#d5a326" stroke="#d5a326" stroke-width="1"><circle cx="531.00" cy="834.10" r="1"/><circle cx="625.60" cy="811.40" r="1"/><circle cx="720.60" cy="818.10" r="1"/><circle cx="815.80" cy="829.90" r="1"/><circle cx="910.60" cy="802.40" r="1"/><circle cx="1005.60" cy="805.30" r="1"/><circle cx="1100.60" cy="789.10" r="1"/><circle cx="1314.10" cy="842.20" r="1"/><circle cx="1409.00" cy="822.50" r="1"/><circle cx="1504.00" cy="814.50" r="1"/></g>
</svg>
</body></html>
